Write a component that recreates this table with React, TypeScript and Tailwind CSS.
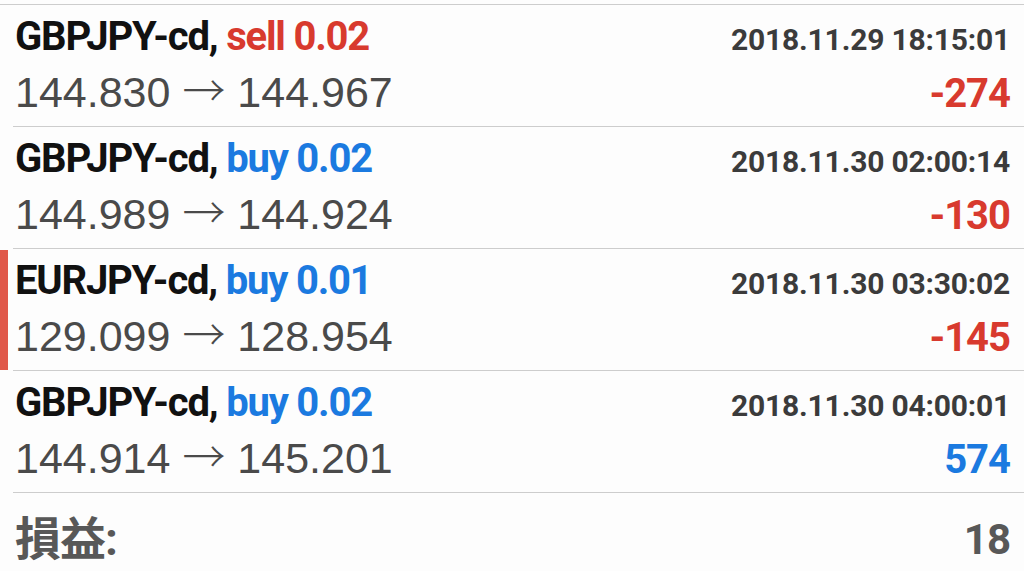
import React from "react";

type Trade = {
  sym: string;
  side: "sell" | "buy";
  lot: string;
  date: string;
  open: string;
  close: string;
  profit: string;
  marked?: boolean;
};

const trades: Trade[] = [
  { sym: "GBPJPY-cd,", side: "sell", lot: "0.02", date: "2018.11.29 18:15:01", open: "144.830", close: "144.967", profit: "-274" },
  { sym: "GBPJPY-cd,", side: "buy", lot: "0.02", date: "2018.11.30 02:00:14", open: "144.989", close: "144.924", profit: "-130" },
  { sym: "EURJPY-cd,", side: "buy", lot: "0.01", date: "2018.11.30 03:30:02", open: "129.099", close: "128.954", profit: "-145", marked: true },
  { sym: "GBPJPY-cd,", side: "buy", lot: "0.02", date: "2018.11.30 04:00:01", open: "144.914", close: "145.201", profit: "574" },
];

const bold = { fontFamily: "Roboto, 'Noto Sans CJK JP', sans-serif" };
const reg = { fontFamily: "'Liberation Sans', Arial, sans-serif" };
const arrow = { fontFamily: "'Noto Sans CJK JP', sans-serif" };

function Row({ t }: { t: Trade }) {
  const neg = t.profit.startsWith("-");
  return (
    <div className="flex h-[122px]">
      <div className="w-[13px] shrink-0 flex">
        {t.marked && <div className="w-[8px] bg-[#e0584a] my-[1px]" />}
      </div>
      <div className="flex-1 border-b-[1.5px] border-[#cdcdcd] pl-[2px] pr-[14px] pt-[12px]">
        <div className="flex justify-between items-baseline">
          <div className="text-[40px] leading-[40px] font-bold tracking-[-1.2px] text-[#111]" style={bold}>
            {t.sym}{" "}
            <span className={t.side === "sell" ? "text-[#d83a2e]" : "text-[#1b7ae0]"}>
              {t.side} {t.lot}
            </span>
          </div>
          <div className="text-[30px] leading-[30px] font-bold tracking-[-0.2px] text-[#3b3b3b]" style={bold}>
            {t.date}
          </div>
        </div>
        <div className="flex justify-between items-baseline mt-[14px]">
          <div className="text-[43px] leading-[43px] text-[#4a4a4a]" style={reg}>
            {t.open}{" "}
            <span className="text-[43px] leading-[0] font-light" style={arrow}>
              →
            </span>{" "}
            {t.close}
          </div>
          <div
            className={`text-[40px] leading-[40px] font-bold tracking-[-1px] ${neg ? "text-[#d83a2e]" : "text-[#1b7ae0]"}`}
            style={bold}
          >
            {t.profit}
          </div>
        </div>
      </div>
    </div>
  );
}

export default function App() {
  return (
    <div className="w-[1024px] h-[571px] bg-[#fdfdfd] overflow-hidden">
      <div className="h-[4px]" />
      <div className="border-t-[1.5px] border-[#cdcdcd]" />
      {trades.map((t, i) => (
        <Row key={i} t={t} />
      ))}
      <div className="flex justify-between items-center pl-[15px] pr-[14px] pt-[16px] h-[77px] font-bold text-[#585858]" style={bold}>
        <span className="text-[46px] tracking-[-1px]">損益:</span>
        <span className="text-[42px] tracking-[-1px]">18</span>
      </div>
    </div>
  );
}
